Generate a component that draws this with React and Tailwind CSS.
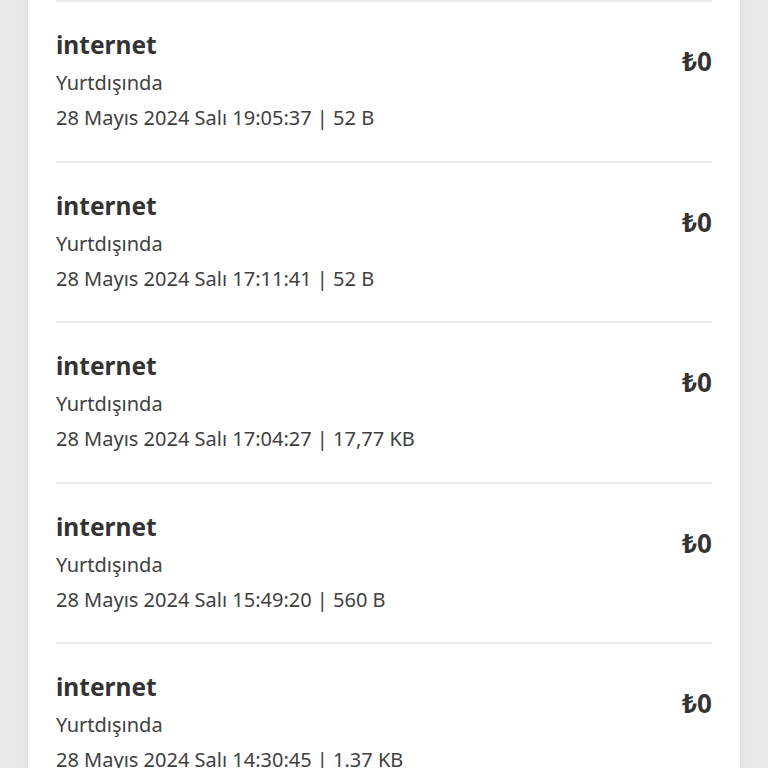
const rows = [
  { time: "19:05:37", size: "52 B" },
  { time: "17:11:41", size: "52 B" },
  { time: "17:04:27", size: "17,77 KB" },
  { time: "15:49:20", size: "560 B" },
  { time: "14:30:45", size: "1.37 KB" },
]

const UsageRow = ({ row }) => (
  <div className="h-[160.5px] shrink-0 border-t-2 border-[#ebebeb] flex justify-between">
    <div className="pt-[27px]">
      <div className="text-[24.5px] leading-[32px] font-bold text-[#333333] mb-[4px]">internet</div>
      <div className="text-[20px] leading-[35px] text-[#404040]">Yurtdışında</div>
      <div className="text-[20px] leading-[35px] text-[#404040] whitespace-nowrap">
        28 Mayıs 2024 Salı {row.time} | {row.size}
      </div>
    </div>
    <div className="pt-[42px] text-[26px] leading-[34px] font-bold text-[#333333]">₺0</div>
  </div>
)

export default function App() {
  return (
    <div
      className="w-[768px] h-[768px] overflow-hidden bg-[#e8e8e8] flex justify-center"
      style={{ fontFamily: '"Noto Sans", sans-serif' }}
    >
      <div className="w-[712px] h-[768px] overflow-hidden bg-white shadow-[0_0_6px_rgba(0,0,0,0.08)] px-[28px] flex flex-col">
        {rows.map((row, i) => (
          <UsageRow key={i} row={row} />
        ))}
      </div>
    </div>
  )
}
